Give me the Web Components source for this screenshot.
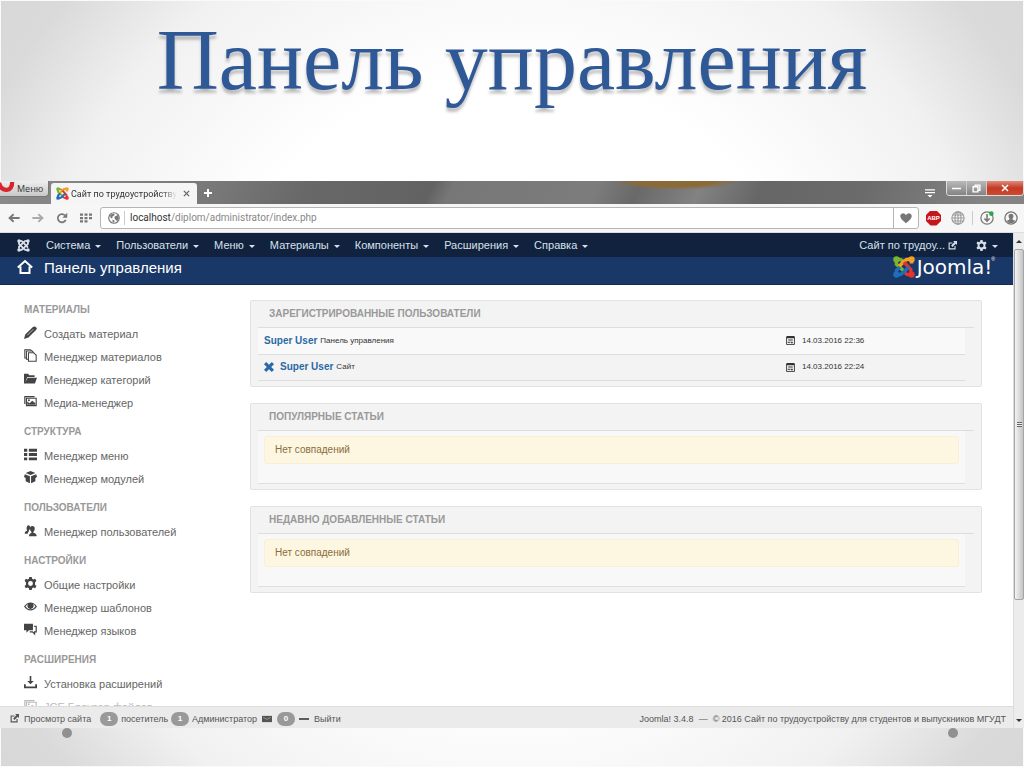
<!DOCTYPE html>
<html lang="ru">
<head>
<meta charset="utf-8">
<title>Панель управления</title>
<style>
html, body { margin: 0; height: 100%; }
body { font-family: "Liberation Sans", Arial, sans-serif; }
</style>
</head>
<body>
<slide-page heading="Панель управления">
  <browser-window>
    <tab-strip slot="chrome" label="Сайт по трудоустройству"></tab-strip>
    <address-bar slot="chrome" host="localhost" path="/diplom/administrator/index.php"></address-bar>
    <admin-nav>
      <nav-menu>Система</nav-menu>
      <nav-menu>Пользователи</nav-menu>
      <nav-menu>Меню</nav-menu>
      <nav-menu>Материалы</nav-menu>
      <nav-menu>Компоненты</nav-menu>
      <nav-menu>Расширения</nav-menu>
      <nav-menu>Справка</nav-menu>
    </admin-nav>
    <admin-header>Панель управления</admin-header>
    <admin-body>
      <side-group slot="side" label="Материалы">
        <side-item icon="pencil">Создать материал</side-item>
        <side-item icon="copy">Менеджер материалов</side-item>
        <side-item icon="folder">Менеджер категорий</side-item>
        <side-item icon="image">Медиа-менеджер</side-item>
      </side-group>
      <side-group slot="side" label="Структура">
        <side-item icon="list">Менеджер меню</side-item>
        <side-item icon="cube">Менеджер модулей</side-item>
      </side-group>
      <side-group slot="side" label="Пользователи">
        <side-item icon="users">Менеджер пользователей</side-item>
      </side-group>
      <side-group slot="side" label="Настройки">
        <side-item icon="gear">Общие настройки</side-item>
        <side-item icon="eye">Менеджер шаблонов</side-item>
        <side-item icon="chat">Менеджер языков</side-item>
      </side-group>
      <side-group slot="side" label="Расширения">
        <side-item icon="install">Установка расширений</side-item>
        <side-item icon="image" faded>JCE Браузер файлов</side-item>
      </side-group>
      <panel-box label="Зарегистрированные пользователи"><login-table></login-table></panel-box>
      <panel-box label="Популярные статьи"><empty-note>Нет совпадений</empty-note></panel-box>
      <panel-box label="Недавно добавленные статьи"><empty-note>Нет совпадений</empty-note></panel-box>
    </admin-body>
    <status-bar></status-bar>
  </browser-window>
</slide-page>

<script>
const ICONS = {
  pencil: '<path fill="currentColor" d="M0 16l1.500-5.500L11 1.300q1.800-1.500 3.800.2t0 3.500L5.500 14.300z"/><path stroke="#fff" stroke-width=".8" d="M4 11.500l7.500-7.500"/>',
  copy: '<g fill="#fff" stroke="currentColor" stroke-width="1.300"><path d="M1 1h7l2 2v8H1z"/><path d="M3 2.500h7l2 2v8H3z"/><path d="M5.500 4.500h6L15 7.500V15H5.500z"/></g>',
  folder: '<path fill="currentColor" d="M0 14V2h5l1.500 2H13v2H4L1.500 13 4.500 7H16l-2.500 7z"/>',
  image: '<path fill="none" stroke="currentColor" stroke-width="1.400" d="M1 11V2h12M3 4h12v9H3z"/><path fill="currentColor" d="M4 12V8l3 2 3-3 4 3v2z"/><circle cx="6" cy="6.500" r="1.200" fill="currentColor"/>',
  list: '<path fill="currentColor" d="M0 1h4v3.500H0zM6 1h10v3.500H6zM0 6.300h4v3.500H0zM6 6.300h10v3.500H6zM0 11.600h4V15H0zM6 11.600h10V15H6z"/>',
  cube: '<path fill="currentColor" d="M8 0l6 2.500L8 5 2 2.500zM1 4l6.300 2.600V15L2 12.500V8.500L0 7.500zM15 4L8.700 6.600V15l5.300-2.500V8.500l2-1z"/>',
  users: '<path fill="currentColor" d="M4 2q3-1.500 3.500 1.500T6 8v1l-1 1.500-.5 1.500H1q-.5-3 2.800-3.700Q2 5 4 2zM10 2.500q3.500 0 3.200 3.500-.3 2.500-1.700 3.700v1q4.500 1 4 4.300H6q0-3.300 3.200-4.300v-1Q7.500 8.500 7.400 6 7.300 2.500 10 2.500z"/>',
  gear: '<path fill="currentColor" fill-rule="evenodd" d="M6.500 0h3l.5 2.300 1.500.8 2.300-.8 1.500 2.600-1.700 1.700v2.800l1.700 1.700-1.500 2.600-2.300-.8-1.500.8-.5 2.300h-3L6 13.700l-1.500-.8-2.300.8L.7 11.100l1.700-1.700V6.600L.7 4.900l1.500-2.600 2.300.8L6 2.300zM8 5a3 3 0 100 6 3 3 0 000-6z"/>',
  eye: '<path fill="currentColor" fill-rule="evenodd" d="M0 8q3.500-5 8-5t8 5q-3.500 5-8 5T0 8zm1.800 0q2.700 3.500 6.200 3.500T14.200 8Q12.500 5.500 11 5q1 1.500.8 3-.5 3-3.800 3T4.200 8Q4 6.500 5 5 3.200 6 1.800 8z"/>',
  chat: '<path fill="currentColor" d="M0 1h11v8H6l-3 3V9H0z"/><path fill="none" stroke="currentColor" stroke-width="1.500" d="M12 4h3v7h-2v2.500L10.500 11H7"/>',
  install: '<path fill="currentColor" d="M7 0h2v6h3L8 10 4 6h3zM0 10h2.200v3h11.600v-3H16v5H0z"/>',
  joomla: '<g fill="none" stroke="currentColor" stroke-width="2.300"><path d="M2.500 12V9.500L9.500 2.800Q11 1.800 13 3"/><path d="M3 2.500Q5.500 2 7 3.500l6.500 7"/><path d="M13.500 3.500v2.500L6.500 12.700Q5 14 3 13"/><path d="M13 13.500Q10.500 14 9 12.500L2.500 6V3"/></g><g fill="currentColor"><circle cx="2.500" cy="2.500" r="2.200"/><circle cx="13.500" cy="2.500" r="2.200"/><circle cx="2.500" cy="13.500" r="2.200"/><circle cx="13.500" cy="13.500" r="2.200"/></g>',
  joomlacolor: '<g fill="none" stroke-width="2.500"><path stroke="#7ab52c" d="M2.500 3V6l5 4.500M3 2.500Q5.500 2 7.500 4"/><path stroke="#f6a022" d="M13 2.500Q10 1.800 8.500 3.500L4.500 7.500M13.500 3v2.500"/><path stroke="#e8322c" d="M8 4.500l5 5.500v3M8.500 12Q10 14 13 13.500"/><path stroke="#1f6fb8" d="M2.500 13v-2.500L5 8M3 13.500q2.500.5 4.500-1.500l4-4"/></g><circle cx="2.500" cy="2.500" r="2.300" fill="#7ab52c"/><circle cx="13.500" cy="2.500" r="2.300" fill="#f6a022"/><circle cx="2.500" cy="13.500" r="2.300" fill="#1f6fb8"/><circle cx="13.500" cy="13.500" r="2.300" fill="#e8322c"/>',
  home: '<path fill="none" stroke="currentColor" stroke-width="2" d="M.8 8.500L8 2l7.200 6.500M3.500 7.500V14h9V7.500"/>',
  external: '<path fill="none" stroke="currentColor" stroke-width="2" d="M8 3.500H2V14h10.500V9"/><path fill="currentColor" d="M9 0h7v7l-2.300-2.300L8 10.500 5.500 8l5.800-5.700z"/>',
  cross: '<path fill="currentColor" d="M3.500 0L8 4.500 12.500 0 16 3.500 11.500 8l4.500 4.500-3.500 3.500L8 11.500 3.500 16 0 12.500 4.500 8 0 3.500z"/>',
  calendar: '<path fill="none" stroke="currentColor" stroke-width="1.600" d="M1 2h14v13H1z"/><path fill="currentColor" d="M1 0h14v4H1zM4 6h8v2H4zM3 10h5v2H3zM9 10h3v3H9z"/>',
  mail: '<path fill="currentColor" d="M0 3h16v10H0z"/><path fill="none" stroke="#aaa" stroke-width="1.200" d="M2 5.500l6 3 6-3"/>',
  minus: '<path fill="currentColor" d="M0 6.500h16v3H0z"/>',
  back: '<path fill="none" stroke="currentColor" stroke-width="2.400" d="M7.500 3L2 8l5.500 5M2 8h13.500"/>',
  forward: '<path fill="none" stroke="currentColor" stroke-width="2.400" d="M8.500 3L14 8l-5.500 5M14 8H.5"/>',
  reload: '<path fill="none" stroke="currentColor" stroke-width="2.300" d="M13 10.500A5.500 5.500 0 1112 4.500"/><path fill="currentColor" d="M15 1v6.500H8.500z"/>',
  grid: '<path fill="currentColor" d="M0 2h4v3H0zM6 2h4v3H6zM12 2h4v3h-4zM0 6.500h4v3H0zM6 6.500h4v3H6zM12 6.500h4v3h-4zM0 11h4v3H0zM6 11h4v3H6z"/>',
  earth: '<circle cx="8" cy="8" r="7" fill="none" stroke="currentColor" stroke-width="1.600"/><path fill="currentColor" d="M3 3.500l5-1.500 1 2-3 2-.5 3L3 7zM9 6l4-2 1.500 4-2 4-2-1-2-3zM6 10l3 1.500L8 14l-2-1z"/>',
  globe: '<g fill="none" stroke="currentColor" stroke-width="1.200"><circle cx="8" cy="8" r="7"/><ellipse cx="8" cy="8" rx="3.500" ry="7"/><path d="M8 1v14M1 8h14M2 4.500h12M2 11.500h12"/></g>',
  heart: '<path fill="currentColor" d="M8 15Q0 9 .3 5 .8 1.500 4 1.500q2.500 0 4 2.500 1.500-2.500 4-2.500 3.200 0 3.700 3.500Q16 9 8 15z"/>',
  download: '<circle cx="8" cy="8" r="7" fill="none" stroke="currentColor" stroke-width="1.400"/><path fill="none" stroke="currentColor" stroke-width="1.800" d="M8 3.500v8M5 8.500l3 3 3-3"/><circle cx="13" cy="3" r="2.600" fill="#2aa84a"/>',
  person: '<circle cx="8" cy="8" r="7" fill="none" stroke="currentColor" stroke-width="1.500"/><path fill="currentColor" d="M8 3q3 0 2.800 3-.2 2-1.300 3 .5 1 3.500 2-2 3-5 3t-5-3q3-1 3.500-2-1.100-1-1.300-3Q5 3 8 3z"/>',
  opera: '<path fill="none" stroke="#d8242c" stroke-width="4.500" d="M-1 2Q1 10 7 9.500T13 1"/>',
  close: '<path fill="none" stroke="currentColor" stroke-width="3" d="M2 2l12 12M14 2L2 14"/>',
  plus: '<path fill="none" stroke="currentColor" stroke-width="4" d="M8 0v16M0 8h16"/>',
  tabs: '<path fill="currentColor" d="M0 2h16v2H0zM0 6.500h16v2H0zM4 11h8l-4 4z"/>',
  restore: '<path fill="none" stroke="currentColor" stroke-width="2.500" d="M2 5h8.500v9H2zM5.500 5V2H14v9h-3.500"/>',
};

const define = (name, html, setup) => {
  const template = document.createElement('template');
  template.innerHTML = html;
  customElements.define(name, class extends HTMLElement {
    constructor() {
      super();
      this.attachShadow({ mode: 'open' }).append(template.content.cloneNode(true));
    }
    connectedCallback() { if (setup) setup(this, this.shadowRoot); }
  });
};

define('ui-icon', `<style>
  :host { display: block; flex: none; width: var(--size, 12px); height: var(--size, 12px); }
  svg { display: block; width: 100%; height: 100%; }
</style><svg viewBox="0 0 16 16" aria-hidden="true"></svg>`,
  (el, root) => { root.querySelector('svg').innerHTML = ICONS[el.getAttribute('name')] || ''; });

define('slide-page', `<style>
  :host { display: flex; flex-direction: column; height: 100%; box-sizing: border-box; border: 1px solid #fafafa;
    background: radial-gradient(circle farthest-corner at 50% 50%, #fff 48%, #f1f1f1 76%, #dadada 92%, #d8d8d8 100%); }
  h1 { flex: none; margin: 0; height: 180px; text-align: center; font: 400 86px/118px "Liberation Serif", serif;
    color: #2f5897; text-shadow: 0 4px 3px rgba(0,0,0,.25); white-space: nowrap; }
  ::slotted(*) { flex: 1; min-height: 0; margin: 0 -1px; }
  footer { flex: none; display: flex; justify-content: space-between; height: 38px; padding: 0 65px 0 61px; }
  i { width: 10px; height: 10px; border-radius: 50%; background: #909090; }
</style><h1></h1><slot></slot><footer><i></i><i></i></footer>`,
  (el, root) => { root.querySelector('h1').textContent = el.getAttribute('heading'); });

define('browser-window', `<style>
  :host { display: flex; flex-direction: column; background: #fff; }
  .view { flex: 1; min-height: 0; display: flex; }
  main { flex: 1; min-width: 0; display: flex; flex-direction: column; }
</style><slot name="chrome"></slot><div class="view"><main><slot></slot></main><scroll-rail></scroll-rail></div>`);

define('scroll-rail', `<style>
  :host { display: flex; flex-direction: column; flex: none; width: 11px; background: #ececec; box-sizing: border-box; border-left: 1px solid #ddd; }
  span { height: 16px; display: grid; place-items: center; }
  .up::before, .down::before { content: ""; border: 3px solid transparent; }
  .up::before { border-bottom-color: #333; border-top: 0; }
  .down::before { border-top-color: #333; border-bottom: 0; }
  .thumb { flex: 350; box-sizing: border-box; border: 1px solid #a5a5a5; border-radius: 2px; display: grid; place-items: center;
    background: linear-gradient(90deg, #f4f4f4, #e0e0e0 40%, #c4c4c4); }
  .thumb i { width: 5px; height: 5px; background: repeating-linear-gradient(#666 0 1px, #eee 1px 2px); }
  .rest { flex: 112; }
</style><span class="up"></span><div class="thumb"><i></i></div><div class="rest"></div><span class="down"></span>`);

define('tab-strip', `<style>
  :host { display: flex; flex: none; height: 23px; overflow: hidden; align-items: flex-start;
    background: radial-gradient(ellipse 64px 9px at 66% 0, #8b6a38 60%, transparent),
      linear-gradient(115deg, #8a8a8a 0, #777 22%, #686868 30%, #626262 42%, #777 44%, #7c7c7c 58%, #696969 62%, #828282 68%, #666 74%, #6b6b6b 84%, #848484 96%); }
  button { font: 10px "Open Sans", sans-serif; padding: 0; border: 0; background: none; color: #333; display: flex; align-items: center; }
  .menu { height: 16px; width: 49px; box-sizing: border-box; gap: 2px; background: linear-gradient(#eee, #c8c8c8); border: 1px solid #777; border-width: 0 1px 1px 0; border-radius: 0 0 4px 0; font-size: 9px; --size: 15px; }
  .tab { align-self: flex-end; display: flex; align-items: center; box-sizing: border-box; width: 146px; height: 21px; margin-left: 2px; padding: 0 7px 0 5px; gap: 2px; background: #f5f5f5; border-radius: 3px 3px 0 0; font: 9px "Roboto", sans-serif; color: #333; --size: 13px; }
  .label { flex: 1; overflow: hidden; white-space: nowrap; mask-image: linear-gradient(90deg, #000 85%, transparent); }
  .tab button { --size: 7px; color: #666; margin-left: 4px; }
  .add { --size: 8px; color: #fff; margin: 8px auto 0 7px; }
  .all { --size: 10px; color: #fff; margin: 7px 11px 0 0; }
  .win { display: flex; height: 14px; border: 1px solid #ddd; border-top: 0; border-radius: 0 0 4px 4px; overflow: hidden; }
  .win button { width: 20px; justify-content: center; background: linear-gradient(#b9b9b9, #838383); color: #fff; --size: 9px; border-right: 1px solid #ccc; }
  .win .x { width: 36px; border: 0; background: linear-gradient(#e08a78, #c33a25 50%, #cf4a30); --size: 8px; }
</style>
<button class="menu"><ui-icon name="opera"></ui-icon>Меню</button>
<div class="tab"><ui-icon name="joomlacolor"></ui-icon><span class="label"></span><button aria-label="Закрыть вкладку"><ui-icon name="close"></ui-icon></button></div>
<button class="add" aria-label="Новая вкладка"><ui-icon name="plus"></ui-icon></button>
<button class="all" aria-label="Вкладки"><ui-icon name="tabs"></ui-icon></button>
<div class="win"><button aria-label="Свернуть"><ui-icon name="minus"></ui-icon></button><button aria-label="Окно"><ui-icon name="restore"></ui-icon></button><button class="x" aria-label="Закрыть"><ui-icon name="close"></ui-icon></button></div>`,
  (el, root) => { root.querySelector('.label').textContent = el.getAttribute('label'); });

define('address-bar', `<style>
  :host { display: flex; flex: none; align-items: center; box-sizing: border-box; height: 29px; padding: 0 6px 0 8px; background: #f6f6f6; border-bottom: 1px solid #ddd; color: #777; }
  button { padding: 0; border: 0; background: none; color: inherit; display: block; }
  .go { display: flex; gap: 12px; margin-right: 8px; --size: 12px; }
  .off { color: #aaa; }
  .field { flex: 1; display: flex; align-items: center; box-sizing: border-box; height: 22px; border: 1px solid #b5b5b5; border-radius: 3px; background: #fff; padding-left: 7px; }
  a { flex: 1; margin-left: 4px; padding-left: 5px; border-left: 1px solid #ccc; font: 10px/14px "Roboto", sans-serif; color: #888; text-decoration: none; }
  b { font-weight: 400; color: #333; }
  .fav { height: 20px; padding: 0 6px; border-left: 1px solid #b5b5b5; color: #777; }
  .ext { display: flex; align-items: center; gap: 10px; margin-left: 7px; --size: 14px; }
  .abp { width: 15px; height: 15px; background: #c4161c; color: #fff; font: 700 6px/15px "Liberation Sans", sans-serif; text-align: center;
    clip-path: polygon(30% 0, 70% 0, 100% 30%, 100% 70%, 70% 100%, 30% 100%, 0 70%, 0 30%); }
  .globe { color: #999; margin-right: -3px; }
  .dl { border-left: 1px solid #ccc; padding-left: 7px; }
</style>
<div class="go"><button aria-label="Назад"><ui-icon name="back"></ui-icon></button><button class="off" aria-label="Вперёд"><ui-icon name="forward"></ui-icon></button><button aria-label="Обновить"><ui-icon name="reload"></ui-icon></button><button aria-label="Экспресс-панель"><ui-icon name="grid"></ui-icon></button></div>
<div class="field"><ui-icon name="earth"></ui-icon><a href="#"><b></b><span></span></a><button class="fav" aria-label="В закладки"><ui-icon name="heart"></ui-icon></button></div>
<div class="ext"><button class="abp">ABP</button><button class="globe" aria-label="Перевод"><ui-icon name="globe"></ui-icon></button><button class="dl" aria-label="Загрузки"><ui-icon name="download"></ui-icon></button><button aria-label="Профиль"><ui-icon name="person"></ui-icon></button></div>`,
  (el, root) => {
    root.querySelector('b').textContent = el.getAttribute('host');
    root.querySelector('a span').textContent = el.getAttribute('path');
  });

define('nav-menu', `<style>
  :host { display: block; }
  button { display: flex; align-items: center; gap: 5px; padding: 0; border: 0; background: none; color: #d9e0ea; font: 11px/23px "Liberation Sans", sans-serif; white-space: nowrap; }
  button::after { content: ""; margin-top: 2px; border: 3px solid transparent; border-top-color: currentColor; border-bottom: 0; }
</style><button aria-haspopup="true"><slot></slot></button>`);

define('admin-nav', `<style>
  :host { display: flex; flex: none; align-items: center; box-sizing: border-box; height: 24px; padding: 0 15px 0 17px; gap: 16px; background: #10223e; color: #d9e0ea; }
  nav { flex: 1; display: flex; gap: 15px; }
  .brand { --size: 13px; }
  a { display: flex; align-items: center; gap: 3px; font-size: 11px; color: inherit; text-decoration: none; --size: 9px; }
  .set { --size: 11px; margin-left: 3px; }
</style><ui-icon class="brand" name="joomla"></ui-icon><nav><slot></slot></nav>
<a href="#">Сайт по трудоу... <ui-icon name="external"></ui-icon></a><nav-menu class="set"><ui-icon name="gear"></ui-icon></nav-menu>`);

define('admin-header', `<style>
  :host { display: flex; flex: none; align-items: center; box-sizing: border-box; height: 28px; padding: 0 18px 0 17px; background: #1a3867; color: #fff; border-bottom: 1px solid #152c50; }
  h2 { flex: 1; margin: 0 0 5px 11px; font: 15px/20px "Liberation Sans", sans-serif; }
  .home { --size: 16px; margin-bottom: 8px; }
  .logo { display: flex; align-items: center; gap: 2px; height: 20px; margin-bottom: 8px; --size: 22px; font: 400 20px/20px "DejaVu Sans", sans-serif; color: #fff; }
  sup { font: 5px/5px "Liberation Sans", sans-serif; align-self: flex-start; margin-left: -3px; }
</style><ui-icon class="home" name="home"></ui-icon><h2><slot></slot></h2><div class="logo"><ui-icon name="joomlacolor"></ui-icon><span>Joomla!</span><sup>®</sup></div>`);

define('admin-body', `<style>
  :host { flex: 1; min-height: 0; overflow: hidden; display: grid; grid-template-columns: 210px 1fr; column-gap: 16px; padding: 0 31px 0 24px; background: #fff; }
  aside { padding-top: 14px; display: flex; flex-direction: column; gap: 6px; }
  section { padding-top: 15px; display: flex; flex-direction: column; gap: 16px; min-width: 0; }
</style><aside><slot name="side"></slot></aside><section><slot></slot></section>`);

define('side-group', `<style>
  :host { display: block; flex: none; }
  h3 { margin: 0 0 3px; font: 700 10px/21px "Liberation Sans", sans-serif; color: #999; text-transform: uppercase; }
</style><h3></h3><slot></slot>`,
  (el, root) => { root.querySelector('h3').textContent = el.getAttribute('label'); });

define('side-item', `<style>
  :host { display: block; --size: 13px; }
  a { display: flex; align-items: center; gap: 7px; height: 23px; font: 11px/23px "Liberation Sans", sans-serif; color: #666; text-decoration: none; white-space: nowrap; }
  ui-icon { color: #444; margin-bottom: 4px; }
  :host([faded]) a, :host([faded]) ui-icon { color: #bbb; }
</style><a href="#"><ui-icon></ui-icon><slot></slot></a>`,
  (el, root) => { root.querySelector('ui-icon').outerHTML = `<ui-icon name="${el.getAttribute('icon')}"></ui-icon>`; });

define('panel-box', `<style>
  :host { display: block; flex: none; box-sizing: border-box; height: 87px; padding: 0 7px; border: 1px solid #e2e2e2; border-radius: 2px; background: #f3f3f3; }
  h3 { margin: 0; padding-left: 11px; font: 700 10px/26px "Liberation Sans", sans-serif; color: #999; text-transform: uppercase; border-bottom: 1px solid #ddd; }
  ::slotted(*) { margin-right: 9px; }
</style><h3></h3><slot></slot>`,
  (el, root) => { root.querySelector('h3').textContent = el.getAttribute('label'); });

define('login-table', `<style>
  :host { display: block; }
  table { width: 100%; border-collapse: collapse; table-layout: fixed; font: 8px/12px "Liberation Sans", sans-serif; color: #333; }
  tr { height: 26px; border-bottom: 1px solid #ddd; }
  tr:first-child { background: #f9f9f9; }
  td { padding: 0 0 0 6px; }
  td:last-child { width: 179px; padding: 0; }
  div { display: flex; align-items: center; gap: 3px; --size: 9px; }
  time { margin-left: 4px; }
  a { font: 700 10px/12px "Liberation Sans", sans-serif; color: #2a69a5; text-decoration: none; }
  button { padding: 0; margin-right: 3px; border: 0; background: none; color: #2a69a5; --size: 10px; }
</style><table>
<tr><td><div><a href="#">Super User</a>Панель управления</div></td><td><div><ui-icon name="calendar"></ui-icon><time>14.03.2016 22:36</time></div></td></tr>
<tr><td><div><button aria-label="Завершить сеанс"><ui-icon name="cross"></ui-icon></button><a href="#">Super User</a>Сайт</div></td><td><div><ui-icon name="calendar"></ui-icon><time>14.03.2016 22:24</time></div></td></tr>
</table>`);

define('empty-note', `<style>
  :host { display: block; box-sizing: border-box; height: 53px; padding: 5px 6px 0; background: #f8f8f9; border-bottom: 1px solid #e0e0e0; }
  p { margin: 0; padding: 0 10px; font: 10px/26px "Liberation Sans", sans-serif; color: #8a6d3b; background: #fdf7e2; border: 1px solid #fbeed5; border-radius: 3px; }
</style><p><slot></slot></p>`);

define('status-bar', `<style>
  :host { display: flex; flex: none; align-items: center; box-sizing: border-box; height: 22px; padding: 2px 7px 0 10px; background: #ebebeb; border-top: 1px solid #ddd; font: 9px/12px "Liberation Sans", sans-serif; color: #555; white-space: nowrap; --size: 9px; }
  a { display: flex; align-items: center; gap: 5px; color: inherit; text-decoration: none; }
  b { width: 18px; margin: 0 3px; border-radius: 7px; background: #999; color: #fff; font: 700 8px/14px "Liberation Sans", sans-serif; text-align: center; }
  .view { margin-right: 6px; }
  .mail { --size: 10px; margin: 0 2px 0 5px; }
  .out { --size: 10px; margin-left: 1px; }
  p { margin: 0 0 0 auto; }
</style><a class="view" href="#"><ui-icon name="external"></ui-icon>Просмотр сайта</a><b>1</b>посетитель <b>1</b>Администратор <ui-icon class="mail" name="mail"></ui-icon><b>0</b><a class="out" href="#"><ui-icon name="minus"></ui-icon>Выйти</a>
<p>Joomla! 3.4.8 &nbsp;—&nbsp; © 2016 Сайт по трудоустройству для студентов и выпускников МГУДТ</p>`);
</script>
</body>
</html>
